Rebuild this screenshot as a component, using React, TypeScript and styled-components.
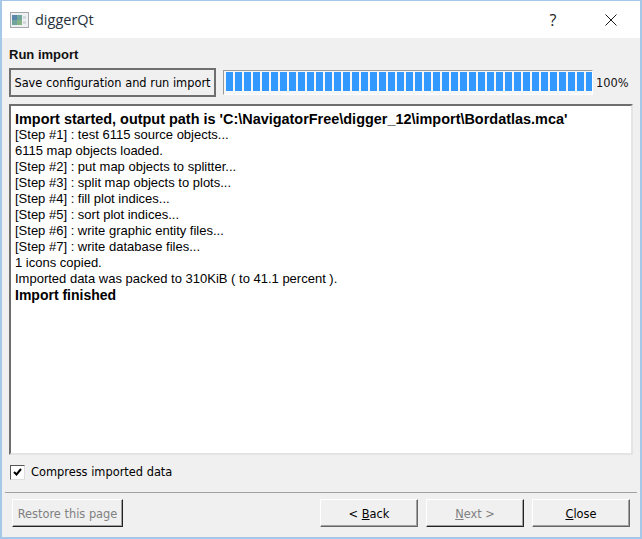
import styled, { createGlobalStyle } from 'styled-components';

const logLines = [
    { text: "Import started, output path is 'C:\\NavigatorFree\\digger_12\\import\\Bordatlas.mca'", bold: '14.45px' },
    { text: '[Step #1] : test 6115 source objects...' },
    { text: '6115 map objects loaded.' },
    { text: '[Step #2] : put map objects to splitter...' },
    { text: '[Step #3] : split map objects to plots...' },
    { text: '[Step #4] : fill plot indices...' },
    { text: '[Step #5] : sort plot indices...' },
    { text: '[Step #6] : write graphic entity files...' },
    { text: '[Step #7] : write database files...' },
    { text: '1 icons copied.' },
    { text: 'Imported data was packed to 310KiB ( to 41.1 percent ).' },
    { text: 'Import finished', bold: '14px' },
];

const App = () => (
    <>
        <GlobalStyle />
        <Window>
            <TitleBar>
                <AppIcon width="19" height="16" viewBox="0 0 19 16">
                    <rect x="0.5" y="0.5" width="18" height="15" fill="#eef0f1" stroke="#a4a9ad" />
                    <rect x="2" y="3" width="10" height="10" fill="#6fa59c" />
                    <rect x="2" y="3" width="5" height="5" fill="#5b86ac" />
                    <rect x="7" y="8" width="5" height="5" fill="#86b486" />
                    <rect x="13" y="4" width="3" height="3" fill="#d5d9dc" />
                    <rect x="13" y="9" width="3" height="3" fill="#d5d9dc" />
                </AppIcon>
                <Title>diggerQt</Title>
                <HelpGlyph>?</HelpGlyph>
                <CloseGlyph width="12" height="12" viewBox="0 0 12 12">
                    <path d="M0.5 0.5 L11.5 11.5 M11.5 0.5 L0.5 11.5" stroke="#1a1a1a" strokeWidth="1" fill="none" />
                </CloseGlyph>
            </TitleBar>
            <Body>
                <Heading>Run import</Heading>
                <RunRow>
                    <RunButton>Save configuration and run import</RunButton>
                    <ProgressTrack>
                        {Array.from({ length: 42 }, (_, i) => (
                            <Chunk key={i} />
                        ))}
                    </ProgressTrack>
                    <Percent>100%</Percent>
                </RunRow>
                <LogBox>
                    {logLines.map((line) => (
                        <LogLine key={line.text} $bold={line.bold}>
                            {line.text}
                        </LogLine>
                    ))}
                </LogBox>
                <CheckRow>
                    <CheckBox>
                        <svg width="9" height="8" viewBox="0 0 9 8">
                            <path d="M1 4 L3.5 6.5 L8 1" stroke="#000" strokeWidth="2" fill="none" />
                        </svg>
                    </CheckBox>
                    <CheckLabel>Compress imported data</CheckLabel>
                </CheckRow>
            </Body>
            <Separator />
            <Footer>
                <WizardButton $wide $disabled>Restore this page</WizardButton>
                <Spacer />
                <WizardButton>&lt; <u>B</u>ack</WizardButton>
                <WizardButton $disabled><u>N</u>ext &gt;</WizardButton>
                <WizardButton><u>C</u>lose</WizardButton>
            </Footer>
        </Window>
    </>
);

const GlobalStyle = createGlobalStyle`
    html, body {
        margin: 0;
        padding: 0;
        background: #f0f0f0;
    }
`;

const Window = styled.div`
    box-sizing: border-box;
    width: 642px;
    height: 539px;
    display: flex;
    flex-direction: column;
    background: #f0f0f0;
    border: 2px solid #a5c7e8;
    border-top-width: 1px;
    font-family: 'DejaVu Sans', Tahoma, sans-serif;
    color: #000;
`;

const TitleBar = styled.div`
    height: 37px;
    flex: none;
    display: flex;
    align-items: center;
    background: #fff;
    padding: 0 23px 0 8px;
`;

const AppIcon = styled.svg`
    flex: none;
`;

const Title = styled.div`
    flex: 1;
    margin-left: 6px;
    font-family: 'Open Sans', 'Noto Sans', sans-serif;
    font-size: 14.5px;
    color: #26323d;
`;

const HelpGlyph = styled.div`
    width: 14px;
    margin-right: 45px;
    font-family: 'Open Sans', sans-serif;
    font-size: 16px;
    color: #222;
    text-align: center;
`;

const CloseGlyph = styled.svg`
    flex: none;
`;

const Body = styled.div`
    flex: none;
    display: flex;
    flex-direction: column;
    padding: 8px 7px 0;
`;

const Heading = styled.div`
    height: 22px;
    line-height: 17px;
    font-family: 'Liberation Sans', Arial, sans-serif;
    font-size: 13px;
    font-weight: bold;
    color: #111;
`;

const RunRow = styled.div`
    display: flex;
    align-items: center;
    height: 29px;
    margin-bottom: 7px;
`;

const RunButton = styled.div`
    box-sizing: border-box;
    width: 207px;
    height: 29px;
    display: flex;
    align-items: center;
    justify-content: center;
    background: #f0f0f0;
    border: 2px solid #6f6f6f;
    font-size: 11.4px;
    white-space: nowrap;
`;

const ProgressTrack = styled.div`
    box-sizing: border-box;
    width: 370px;
    height: 25px;
    margin-left: 7px;
    display: flex;
    gap: 2px;
    padding: 1px 1px 3px 2px;
    background: #f6f6f6;
    border-top: 1px solid #9a9a9a;
    border-left: 1px solid #9a9a9a;
    border-right: 1px solid #fff;
    border-bottom: 1px solid #fff;
    overflow: hidden;
`;

const Chunk = styled.div`
    flex: none;
    width: 7px;
    background: #3399ff;
`;

const Percent = styled.div`
    margin-left: 3px;
    font-size: 11.4px;
    color: #111;
`;

const LogBox = styled.div`
    box-sizing: border-box;
    width: 624px;
    height: 351px;
    padding: 5px 4px;
    background: #fff;
    border-top: 2px solid #6e6e6e;
    border-left: 2px solid #6e6e6e;
    border-right: 2px solid #e4e4e4;
    border-bottom: 2px solid #e4e4e4;
    font-family: 'Liberation Sans', Arial, sans-serif;
    font-size: 13px;
`;

const LogLine = styled.div<{ $bold?: string }>`
    height: 16px;
    line-height: 16px;
    white-space: nowrap;
    font-size: ${({ $bold }) => $bold ?? '13px'};
    font-weight: ${({ $bold }) => ($bold ? 'bold' : 'normal')};
`;

const CheckRow = styled.div`
    display: flex;
    align-items: center;
    height: 16px;
    margin-top: 9px;
    padding-left: 1px;
`;

const CheckBox = styled.div`
    box-sizing: border-box;
    width: 15px;
    height: 15px;
    display: flex;
    padding: 2px 0 0 2px;
    background: #fff;
    border-top: 1px solid #555;
    border-left: 1px solid #555;
    border-right: 1px solid #ddd;
    border-bottom: 1px solid #ddd;
`;

const CheckLabel = styled.div`
    margin-left: 6px;
    font-size: 11.4px;
`;

const Separator = styled.div`
    height: 1px;
    margin: 12px 3px 0;
    background: #a0a0a0;
`;

const Footer = styled.div`
    display: flex;
    gap: 8px;
    padding: 6px 10px 0;
`;

const Spacer = styled.div`
    flex: 1;
`;

const WizardButton = styled.div<{ $wide?: boolean; $disabled?: boolean }>`
    box-sizing: border-box;
    width: ${({ $wide }) => ($wide ? '111px' : '98px')};
    height: 28px;
    padding-top: 2px;
    display: flex;
    align-items: center;
    justify-content: center;
    white-space: pre;
    font-size: 11.4px;
    color: ${({ $disabled }) => ($disabled ? '#808080' : '#000')};
    background: #f0f0f0;
    border-top: 1px solid #fff;
    border-left: 1px solid #fff;
    border-right: 1px solid ${({ $disabled }) => ($disabled ? '#222' : '#666')};
    border-bottom: 1px solid ${({ $disabled }) => ($disabled ? '#222' : '#666')};
    box-shadow: inset -1px -1px 0 #a0a0a0;
`;

export default App;
